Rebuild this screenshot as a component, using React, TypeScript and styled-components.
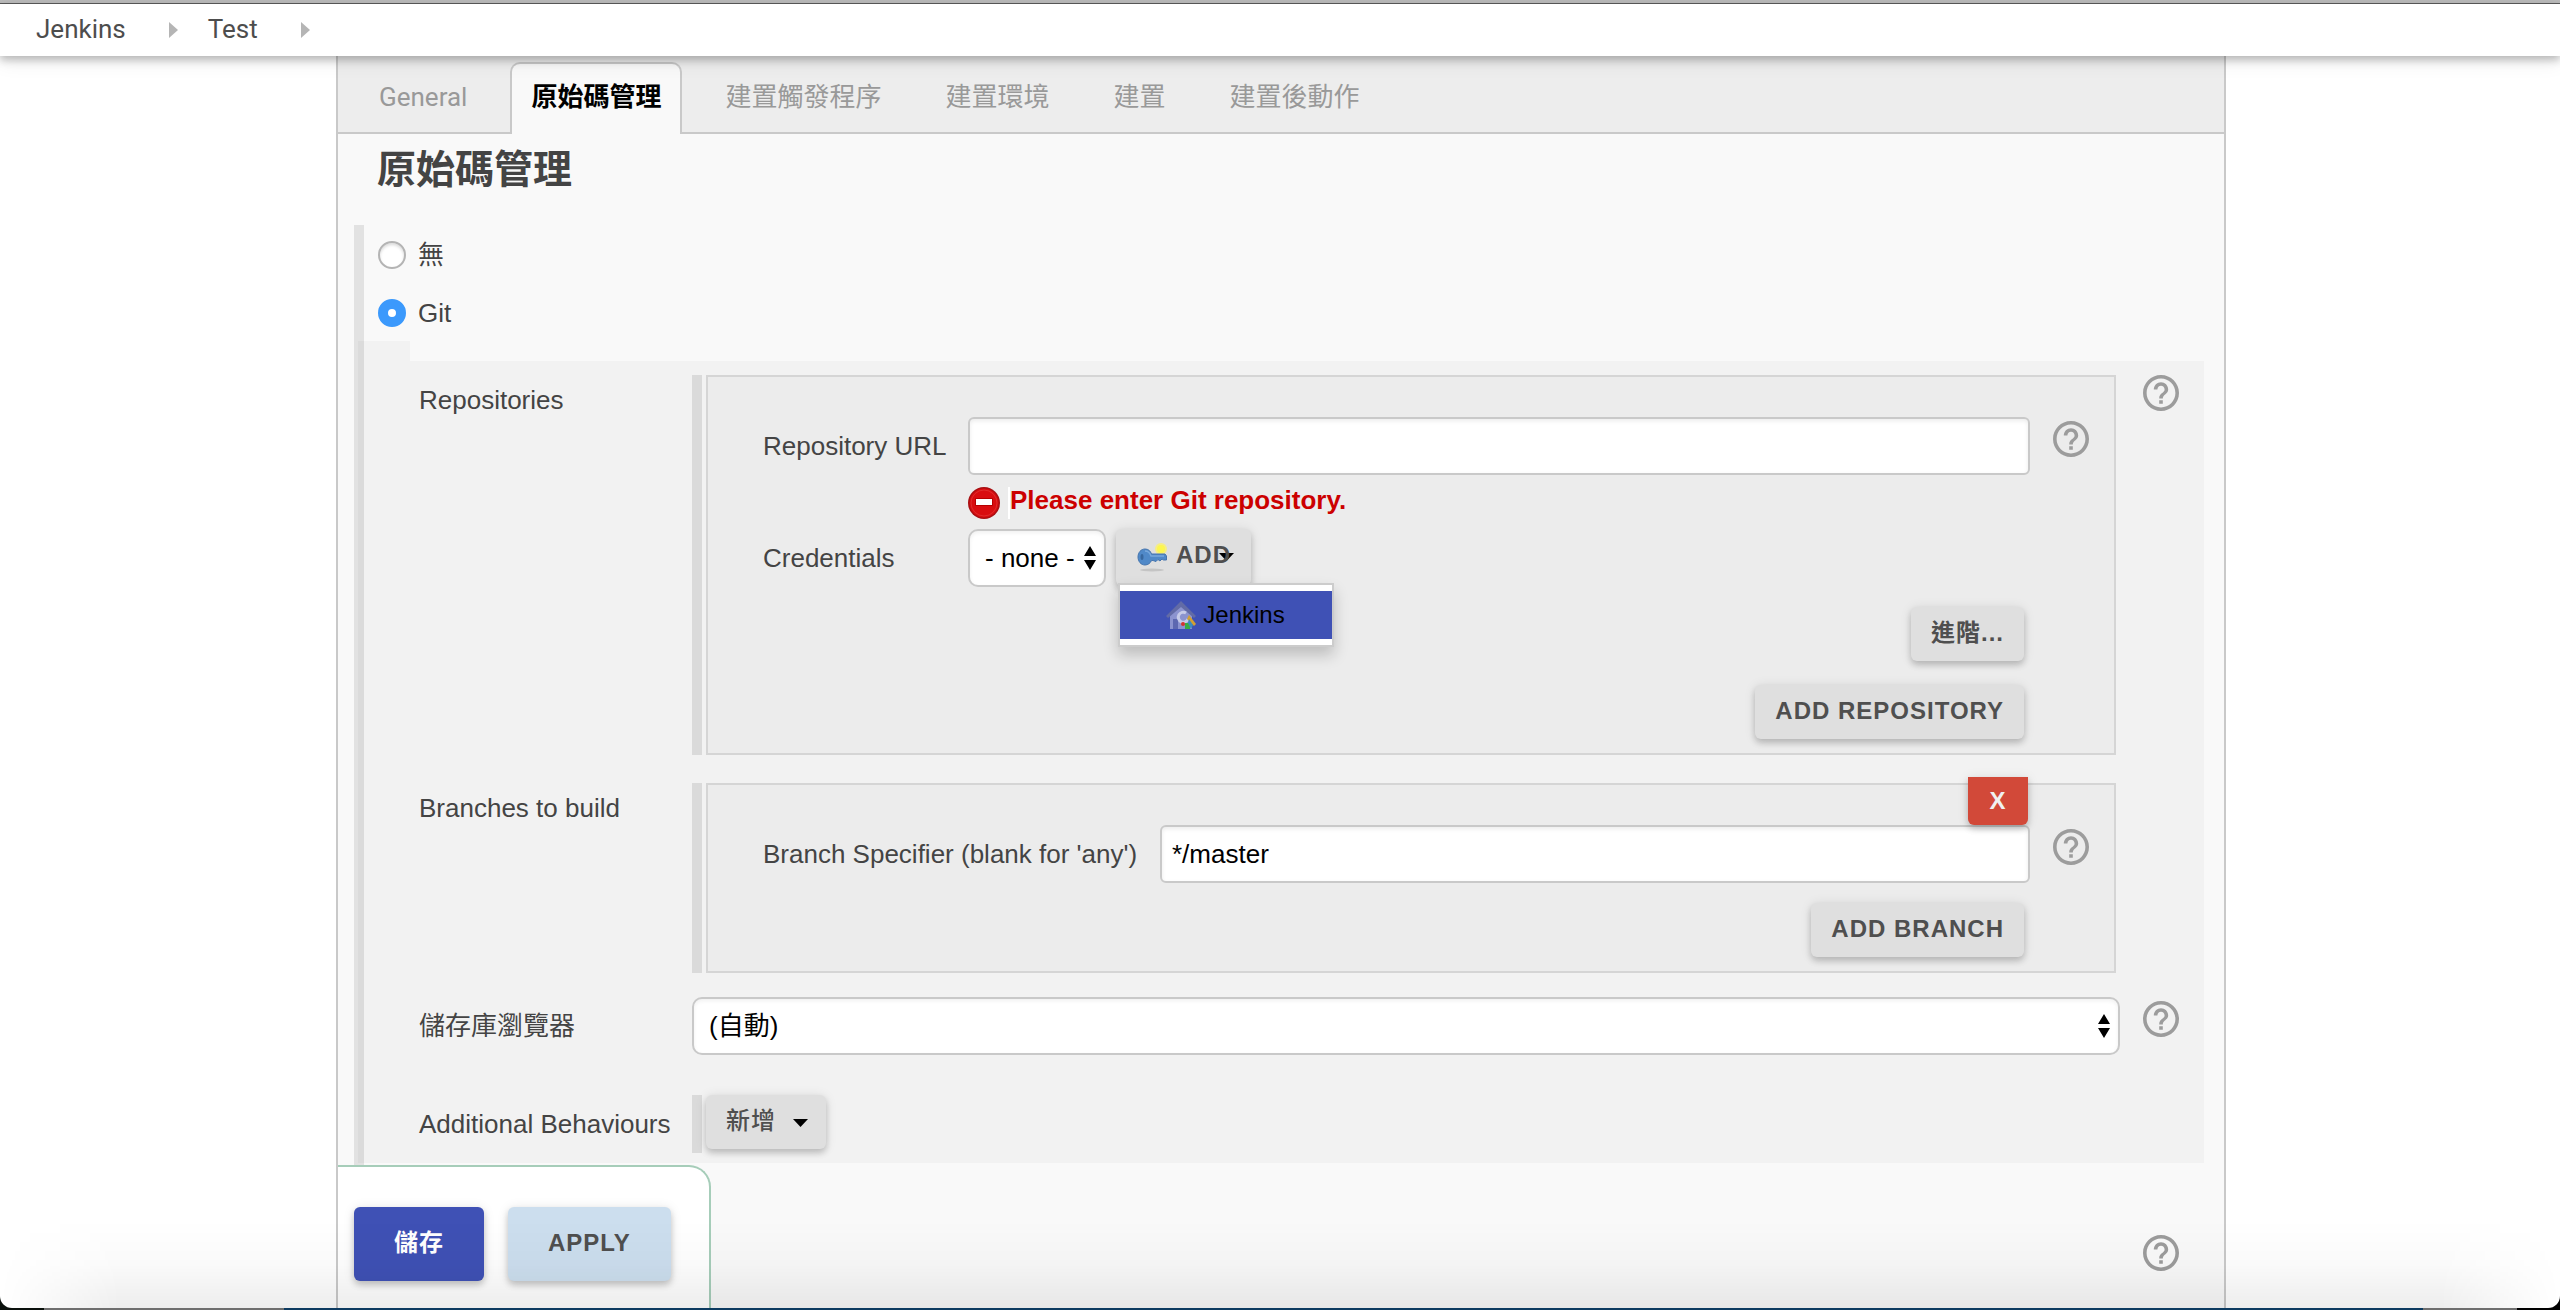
import React from "react";
import styled, { createGlobalStyle, css } from "styled-components";

const sans = `"Liberation Sans", Arial, "Noto Sans CJK TC", sans-serif`;
const roboto = `Roboto, "Noto Sans CJK TC", sans-serif`;

const GlobalStyle = createGlobalStyle`
  *, *::before, *::after { box-sizing: border-box; }
  body { margin: 0; font-family: ${sans}; font-size: 26px; line-height: 30px; color: #444; }
  button, input, select { font: inherit; margin: 0; }
`;

/* ---------- window ---------- */

const Desktop = styled.div`
  min-height: 100vh;
  display: flex;
  flex-direction: column;
  padding-bottom: 2px;
  background: linear-gradient(
    90deg,
    #0a100c 44px,
    #6e6e6e 44px 284px,
    #0c3a60 284px calc(100% - 137px),
    #6e6e6e calc(100% - 137px) calc(100% - 43px),
    #000 calc(100% - 43px)
  );
`;

const Window = styled.div`
  position: relative;
  flex: 1;
  display: flex;
  flex-direction: column;
  background: #fff;
  border-radius: 0 0 12px 12px;
  overflow: hidden;

  &::after {
    content: "";
    position: absolute;
    inset: auto 0 0 0;
    height: 88px;
    pointer-events: none;
    background: linear-gradient(rgba(0, 0, 0, 0), rgba(0, 0, 0, 0.02) 50%, rgba(0, 0, 0, 0.07));
    mask-image: linear-gradient(90deg, transparent, #000 120px calc(100% - 120px), transparent);
  }
`;

const TitleEdge = styled.div`
  height: 4px;
  background: #bbb;
  border-bottom: 1px solid #5a5a5a;
`;

const Breadcrumbs = styled.nav`
  position: relative;
  z-index: 1;
  display: flex;
  align-items: center;
  padding: 10px 36px 12px;
  background: #fff;
  font-family: ${roboto};
  box-shadow: 0 4px 8px rgba(0, 0, 0, 0.24), 0 6px 20px rgba(0, 0, 0, 0.08);
`;

const Crumb = styled.a`
  color: #4d4d4d;
  text-decoration: none;
`;

const Chevron = styled.svg`
  width: 9px;
  height: 16px;
  margin: 2px 30px 0 43px;
  fill: #b5b5b5;
`;

/* ---------- panel and tabs ---------- */

const Panel = styled.main`
  flex: 1;
  display: flex;
  flex-direction: column;
  margin: 0 334px 0 336px;
  background: #f9f9f9;
  border: solid #c9c9c9;
  border-width: 0 2px;
`;

const Tabs = styled.nav`
  display: flex;
  gap: 22px;
  padding: 6px 20px 0;
  background: #ededed;
  border-bottom: 2px solid #c9c9c9;
  font-family: ${roboto};
`;

const Tab = styled.a<{ $active?: boolean }>`
  margin-bottom: -2px;
  padding: 18px 19px 22px;
  border: 2px solid transparent;
  border-bottom: 0;
  color: #999;
  text-decoration: none;
  ${(p) =>
    p.$active &&
    css`
      color: #000;
      font-weight: 700;
      background: #f9f9f9;
      border-color: #c9c9c9;
      border-radius: 10px 10px 0 0;
    `}
`;

const Title = styled.h1`
  margin: 12px 0 31px;
  padding-left: 39px;
  font-size: 39px;
  line-height: 48px;
  font-weight: 700;
`;

/* ---------- source selection ---------- */

const Sources = styled.fieldset`
  min-width: 0;
  margin: 0 20px 0 16px;
  padding: 16px 0 2px;
  border: 0;
  border-left: 10px solid #e2e2e2;
`;

const RadioList = styled.div`
  display: flex;
  flex-direction: column;
  gap: 30px;
  padding: 0 14px 14px;
`;

const RadioLabel = styled.label`
  display: flex;
  align-items: center;
  gap: 12px;
  line-height: 28px;
`;

const Radio = styled.input`
  appearance: none;
  width: 28px;
  height: 28px;
  border: 2px solid #b4b4b4;
  border-radius: 50%;
  background: #fff;
  box-shadow: inset 0 2px 3px rgba(0, 0, 0, 0.14);
  &:checked {
    border: 10px solid #3b99fc;
    box-shadow: none;
  }
`;

const shade = "rgba(0, 0, 0, 0.028)";

const Notch = styled.div`
  width: 52px;
  height: 20px;
  margin-left: -6px;
  background: ${shade};
`;

const Group = styled.div`
  margin-left: -6px;
  padding: 14px 25px 10px 61px;
  background: ${shade};
`;

const Row = styled.div<{ $gap?: number }>`
  display: grid;
  grid-template-columns: 273px minmax(0, 1fr) 36px;
  margin-top: ${(p) => p.$gap ?? 0}px;
`;

const RowLabel = styled.label<{ $top?: number }>`
  padding-top: ${(p) => p.$top ?? 10}px;
  white-space: nowrap;
`;

const Cell = styled.div`
  margin-right: 23px;
`;

const Barred = styled.div`
  display: flex;
  gap: 4px;
  min-height: 58px;
  margin-right: 4px;
  &::before {
    content: "";
    width: 10px;
    background: #dadada;
  }
`;

const Box = styled.div`
  position: relative;
  flex: 1;
  padding: 40px 25px 14px 55px;
  background: #ececec;
  border: 2px solid #d5d5d5;
`;

const Field = styled.div<{ $label: number; $gap?: number }>`
  display: grid;
  grid-template-columns: ${(p) => p.$label}px minmax(0, 1fr) 36px;
  margin-top: ${(p) => p.$gap ?? 0}px;
`;

const TextInput = styled.input`
  display: block;
  width: 100%;
  height: 58px;
  padding: 0 10px;
  border: 2px solid #c9c9c9;
  border-radius: 6px;
  background: #fff;
  color: #000;
  box-shadow: inset 0 2px 4px rgba(0, 0, 0, 0.08);
  outline: none;
`;

const ErrorLine = styled.p`
  display: flex;
  align-items: flex-start;
  gap: 8px;
  margin: 12px 0 0;
  font-weight: 700;
  line-height: 26px;
  color: #c00;
`;

const ErrorText = styled.span`
  height: 32px;
  border-left: 2px solid #fff;
`;

const SelectWrap = styled.div<{ $wide?: boolean }>`
  position: relative;
  width: ${(p) => (p.$wide ? "100%" : "138px")};
`;

const SelectBox = styled.select`
  appearance: none;
  display: block;
  width: 100%;
  height: 58px;
  padding: 0 0 0 15px;
  border: 2px solid #c9c9c9;
  border-radius: 10px;
  background: #fff;
  color: #000;
  box-shadow: inset 0 2px 4px rgba(0, 0, 0, 0.06);
`;

const Arrows = styled.svg`
  position: absolute;
  top: 17px;
  right: 10px;
  width: 12px;
  height: 24px;
  pointer-events: none;
`;

const Inline = styled.div`
  display: flex;
  align-items: flex-start;
  gap: 10px;
`;

/* ---------- buttons ---------- */

const Button = styled.button<{ $tone?: "save" | "apply"; $light?: boolean }>`
  display: inline-flex;
  align-items: flex-start;
  padding: 11px 20px 13px;
  border: 0;
  border-radius: 6px;
  background: #dfdfdf;
  color: #4f4f4f;
  font-size: 24px;
  font-weight: ${(p) => (p.$light ? 500 : 700)};
  letter-spacing: 1px;
  text-transform: uppercase;
  white-space: nowrap;
  box-shadow: 0 4px 6px rgba(0, 0, 0, 0.18), 0 1px 12px rgba(0, 0, 0, 0.1);
  ${(p) =>
    p.$tone &&
    css`
      padding: 21px 40px 23px;
      background: ${p.$tone === "save" ? "#3f51b5" : "#ccdeee"};
      color: ${p.$tone === "save" ? "#fff" : "#4f4f4f"};
    `}
`;

const Actions = styled.div`
  display: flex;
  flex-direction: column;
  align-items: flex-end;
  gap: 24px;
  margin: 20px 65px 0 0;
`;

const DeleteButton = styled(Button)`
  position: absolute;
  top: -8px;
  right: 86px;
  padding: 9px 20px;
  border-radius: 0 0 6px 6px;
  background: #d24939;
  color: #f0f0f0;
  width: 60px;
  justify-content: center;
`;

const MenuAnchor = styled.div`
  position: relative;
`;

const Caret = styled.svg<{ $over?: boolean }>`
  width: 15px;
  height: 8px;
  margin: 13px -2px 0 17px;
  ${(p) =>
    p.$over &&
    css`
      position: absolute;
      top: 24px;
      right: 17px;
      margin: 0;
    `}
`;

const ButtonText = styled.span`
  position: relative;
  z-index: 1;
`;

const KeySvg = styled.svg`
  width: 32px;
  height: 32px;
  margin: 1px 8px 0 0;
`;

const Menu = styled.div`
  position: absolute;
  z-index: 2;
  top: 54px;
  left: 2px;
  width: 216px;
  padding: 6px 0;
  background: #fff;
  border: 2px solid #ccc;
  box-shadow: 0 8px 14px rgba(0, 0, 0, 0.2);
`;

const MenuItem = styled.button`
  display: flex;
  align-items: center;
  justify-content: center;
  gap: 6px;
  width: 100%;
  height: 48px;
  padding: 0 2px 0 0;
  border: 0;
  background: #3f51b5;
  color: #000;
  font-size: 24px;
`;

const HelpButton = styled.button<{ $top?: number }>`
  display: block;
  width: 36px;
  height: 36px;
  margin-top: ${(p) => p.$top ?? 0}px;
  padding: 0;
  border: 0;
  background: none;
  svg {
    display: block;
    width: 36px;
    height: 36px;
    fill: #9c9c9c;
  }
`;

/* ---------- bottom bar ---------- */

const BottomRow = styled.div`
  flex: 1;
  display: flex;
  justify-content: space-between;
  padding-right: 45px;
`;

const SaveBar = styled.div`
  display: flex;
  align-items: flex-start;
  gap: 24px;
  padding: 40px 38px 24px 16px;
  background: #fff;
  border: solid #a6cdb9;
  border-width: 2px 2px 0 0;
  border-radius: 0 22px 0 0;
`;

const Help = ({ top }: { top?: number }) => (
  <HelpButton type="button" aria-label="Help" $top={top}>
    <svg viewBox="2 2 20 20" aria-hidden="true">
      <path d="M11 18h2v-2h-2v2zm1-16C6.48 2 2 6.48 2 12s4.48 10 10 10 10-4.480 10-10S17.520 2 12 2zm0 18c-4.410 0-8-3.590-8-8s3.590-8 8-8 8 3.590 8 8-3.590 8-8 8zm0-14c-2.210 0-4 1.790-4 4h2c0-1.100.9-2 2-2s2 .9 2 2c0 2-3 1.750-3 5h2c0-2.250 3-2.500 3-5 0-2.210-1.790-4-4-4z" />
    </svg>
  </HelpButton>
);

const Separator = () => (
  <Chevron viewBox="0 0 9 16" aria-hidden="true">
    <path d="M0 0 9 8 0 16z" />
  </Chevron>
);

const DownCaret = ({ over }: { over?: boolean }) => (
  <Caret viewBox="0 0 15 8" aria-hidden="true" $over={over}>
    <path d="M0 0h15L7.500 8z" />
  </Caret>
);

const Select = ({ id, value, wide }: { id: string; value: string; wide?: boolean }) => (
  <SelectWrap $wide={wide}>
    <SelectBox id={id} defaultValue={value}>
      <option>{value}</option>
    </SelectBox>
    <Arrows viewBox="0 0 12 24" aria-hidden="true">
      <path d="M6 0 12 10H0zM0 14h12L6 24z" />
    </Arrows>
  </SelectWrap>
);

const ErrorIcon = () => (
  <svg width="32" height="32" viewBox="0 0 32 32" aria-hidden="true">
    <circle cx="16" cy="16" r="16" fill="#a80f12" />
    <circle cx="16" cy="16" r="14.500" fill="#d90d10" />
    <circle cx="16" cy="16" r="13" fill="none" stroke="#e02c2c" strokeWidth="1" />
    <rect x="7" y="11" width="18" height="8" rx="1" fill="#b50000" />
    <rect x="8" y="12" width="16" height="6" fill="#fff" />
  </svg>
);

const KeyIcon = () => (
  <KeySvg viewBox="0 0 32 32" aria-hidden="true">
    <ellipse cx="16" cy="29" rx="12" ry="1.500" fill="#c4c4c4" />
    <circle cx="25" cy="8" r="6" fill="#f6ee84" />
    <circle cx="25" cy="8" r="4" fill="#fcf650" />
    <path
      d="M9 8c3.500 0 5.500 2 6.500 5H29l1.500 2v4h-3L26 18l-2 2-2-1.500-2 2-3-1h-1.500C14.500 22 12 24 9 24c-4 0-7-3.500-7-8s3-8 7-8z"
      fill="#5089c8"
      stroke="#4675ae"
      strokeWidth="1"
    />
    <path d="M9 10c3 0 5 2 6 5h13" fill="none" stroke="#78a8dc" strokeWidth="1.500" />
    <ellipse cx="6" cy="16" rx="1.500" ry="3" fill="#38689f" />
  </KeySvg>
);

const HouseIcon = () => (
  <svg width="32" height="32" viewBox="0 0 32 32" aria-hidden="true">
    <path d="M5 15 16 6l11 9v15H5z" fill="#8b93cf" />
    <path d="M16 2 1 17l2 2L16 8l13 11 2-2z" fill="#626ba6" />
    <path d="M8 20h5v10H8z" fill="#5d68b0" />
    <path d="M21 14a5 5 0 1 0 2 6" fill="none" stroke="#c6cbe8" strokeWidth="3" />
    <circle cx="18" cy="25" r="2" fill="#d3342c" />
    <path d="M20 24h5v6h-5z" fill="#38ad43" />
    <path d="m24 16 7 9-2 2-7-7z" fill="#d3a032" />
    <path d="m24 20 4 6-2 4-3-6z" fill="#3c8bc0" />
  </svg>
);

const tabs = ["General", "原始碼管理", "建置觸發程序", "建置環境", "建置", "建置後動作"];

export default function App() {
  return (
    <Desktop>
      <GlobalStyle />
      <Window>
        <TitleEdge />
        <Breadcrumbs aria-label="Breadcrumb">
          <Crumb href="#">Jenkins</Crumb>
          <Separator />
          <Crumb href="#">Test</Crumb>
          <Separator />
        </Breadcrumbs>

        <Panel>
          <Tabs>
            {tabs.map((name) => (
              <Tab key={name} href="#" $active={name === "原始碼管理"}>
                {name}
              </Tab>
            ))}
          </Tabs>

          <Title>原始碼管理</Title>

          <Sources>
            <RadioList>
              <RadioLabel>
                <Radio type="radio" name="scm" />無
              </RadioLabel>
              <RadioLabel>
                <Radio type="radio" name="scm" defaultChecked />
                Git
              </RadioLabel>
            </RadioList>
            <Notch />
            <Group>
              <Row>
                <RowLabel as="div">Repositories</RowLabel>
                <Cell>
                  <Barred>
                    <Box>
                      <Field $label={205}>
                        <RowLabel htmlFor="repo-url" $top={14}>Repository URL</RowLabel>
                        <Cell>
                          <TextInput id="repo-url" type="text" />
                          <ErrorLine>
                            <ErrorIcon />
                            <ErrorText>Please enter Git repository.</ErrorText>
                          </ErrorLine>
                        </Cell>
                        <Help top={4} />
                      </Field>
                      <Field $label={205} $gap={10}>
                        <RowLabel htmlFor="credentials" $top={14}>Credentials</RowLabel>
                        <Inline>
                          <Select id="credentials" value="- none -" />
                          <MenuAnchor>
                            <Button type="button">
                              <KeyIcon />
                              <DownCaret over />
                              <ButtonText>Add</ButtonText>
                            </Button>
                            <Menu>
                              <MenuItem type="button">
                                <HouseIcon />
                                Jenkins
                              </MenuItem>
                            </Menu>
                          </MenuAnchor>
                        </Inline>
                      </Field>
                      <Actions>
                        <Button type="button">進階...</Button>
                        <Button type="button">Add Repository</Button>
                      </Actions>
                    </Box>
                  </Barred>
                </Cell>
                <Help />
              </Row>

              <Row $gap={28}>
                <RowLabel as="div">Branches to build</RowLabel>
                <Cell>
                  <Barred>
                    <Box>
                      <DeleteButton type="button">X</DeleteButton>
                      <Field $label={397}>
                        <RowLabel htmlFor="branch" $top={14}>Branch Specifier (blank for 'any')</RowLabel>
                        <Cell>
                          <TextInput id="branch" type="text" defaultValue="*/master" />
                        </Cell>
                        <Help top={4} />
                      </Field>
                      <Actions>
                        <Button type="button">Add Branch</Button>
                      </Actions>
                    </Box>
                  </Barred>
                </Cell>
              </Row>

              <Row $gap={24}>
                <RowLabel htmlFor="browser" $top={14}>儲存庫瀏覽器</RowLabel>
                <Cell>
                  <Select id="browser" value="(自動)" wide />
                </Cell>
                <Help top={4} />
              </Row>

              <Row $gap={40}>
                <RowLabel as="div" $top={14}>Additional Behaviours</RowLabel>
                <Cell>
                  <Barred>
                    <MenuAnchor>
                      <Button type="button" $light>
                        新增
                        <DownCaret />
                      </Button>
                    </MenuAnchor>
                  </Barred>
                </Cell>
              </Row>
            </Group>
          </Sources>

          <BottomRow>
            <SaveBar>
              <Button type="button" $tone="save">儲存</Button>
              <Button type="button" $tone="apply">Apply</Button>
            </SaveBar>
            <Help top={70} />
          </BottomRow>
        </Panel>
      </Window>
    </Desktop>
  );
}
